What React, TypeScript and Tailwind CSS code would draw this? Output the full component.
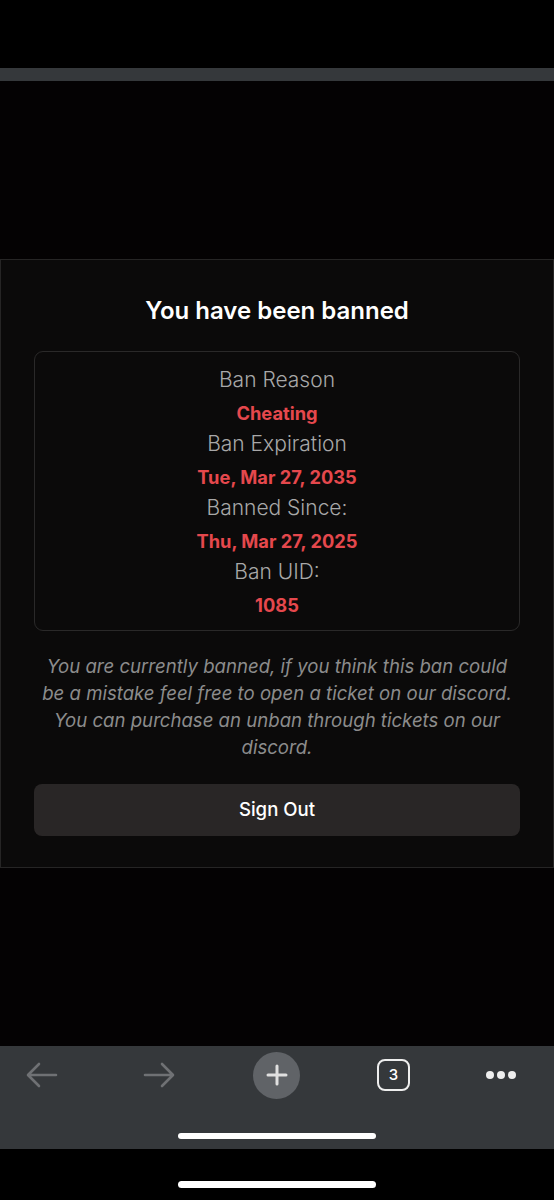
import React from "react";

const font = { fontFamily: "Inter, 'Noto Sans', sans-serif" };

function Row({ label, value }: { label: string; value: string }) {
  return (
    <>
      <div className="h-[30px] leading-[30px] text-[21px] font-light text-[#a8a8a8]">{label}</div>
      <div className="h-[34px] pt-[2px] leading-[32px] text-[18.3px] font-bold text-[#e5484d]">{value}</div>
    </>
  );
}

export default function App() {
  return (
    <div className="w-[554px] h-[1200px] bg-[#040203] flex flex-col" style={font}>
      <div className="h-[68px] bg-black" />
      <div className="h-[13px] bg-[#35383b]" />
      <div className="h-[178px]" />
      <div className="h-[609px] bg-[#0b0a0a] border border-[#262525] px-[33px] pt-[35px] flex flex-col">
        <h1 className="text-center text-[24px] leading-[32px] font-semibold text-white">You have been banned</h1>
        <div className="mt-[24px] border border-[#2a2929] rounded-[9px] pt-[13px] pb-[9px] flex flex-col items-center text-center">
          <Row label="Ban Reason" value="Cheating" />
          <Row label="Ban Expiration" value="Tue, Mar 27, 2035" />
          <Row label="Banned Since:" value="Thu, Mar 27, 2025" />
          <Row label="Ban UID:" value="1085" />
        </div>
        <p className="mt-[22px] px-[2px] text-center italic text-[18.6px] leading-[27px] text-[#8c8c8c]">
          You are currently banned, if you think this ban could be a mistake feel free to open a ticket on our discord. You can purchase an unban through tickets on our discord.
        </p>
        <button className="mt-[23px] h-[52px] rounded-[8px] bg-[#292626] text-white text-[18.6px] font-medium">
          Sign Out
        </button>
      </div>
      <div className="h-[178px]" />
      <div className="h-[103px] bg-[#35383b] flex flex-col">
        <div className="h-[58px] flex items-center">
          <div className="w-[84px] flex justify-center">
            <svg width="32" height="26" viewBox="0 0 32 26" fill="none" stroke="#6f7174" strokeWidth="2.6" strokeLinecap="round" strokeLinejoin="round">
              <path d="M30 13H3M13 2L2 13l11 11" />
            </svg>
          </div>
          <div className="w-[150px] flex justify-center">
            <svg width="32" height="26" viewBox="0 0 32 26" fill="none" stroke="#6f7174" strokeWidth="2.6" strokeLinecap="round" strokeLinejoin="round">
              <path d="M2 13h27M19 2l11 11-11 11" />
            </svg>
          </div>
          <div className="w-[85px] flex justify-center">
            <div className="w-[47px] h-[47px] rounded-full bg-[#606367] flex items-center justify-center">
              <svg width="22" height="22" viewBox="0 0 22 22" stroke="#e0e0e0" strokeWidth="3" strokeLinecap="round">
                <path d="M11 2v18M2 11h18" />
              </svg>
            </div>
          </div>
          <div className="w-[149px] flex justify-center">
            <div className="w-[33px] h-[32px] rounded-[8px] border-[2.5px] border-[#eeeeee] flex items-center justify-center text-[15px] font-medium text-white">3</div>
          </div>
          <div className="w-[66px] flex justify-center gap-[3px]">
            <div className="w-[8px] h-[8px] rounded-full bg-[#eeeeee]" />
            <div className="w-[8px] h-[8px] rounded-full bg-[#eeeeee]" />
            <div className="w-[8px] h-[8px] rounded-full bg-[#eeeeee]" />
          </div>
        </div>
        <div className="mt-[29px] mx-auto w-[198px] h-[6px] rounded-full bg-white" />
      </div>
      <div className="h-[51px] bg-black flex flex-col">
        <div className="mt-[32px] mx-auto w-[198px] h-[7px] rounded-full bg-white" />
      </div>
    </div>
  );
}
